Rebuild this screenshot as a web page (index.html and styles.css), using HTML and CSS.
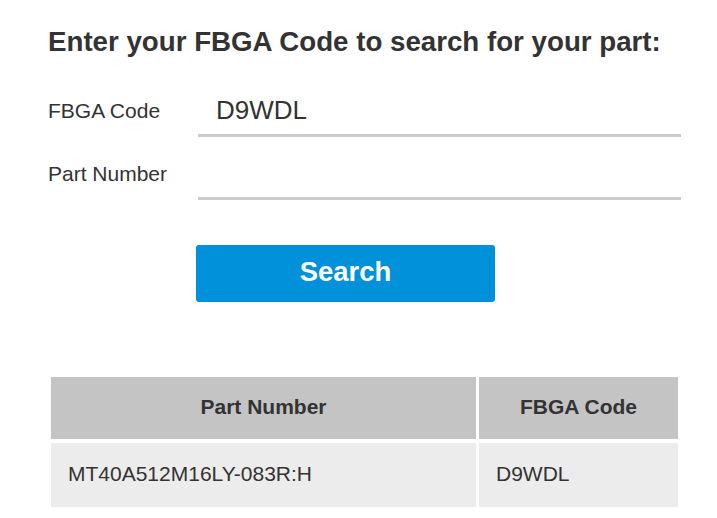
FILE: index.html
```html
<!DOCTYPE html>
<html lang="en">
<head>
<meta charset="utf-8">
<title>FBGA Code search</title>
<link rel="stylesheet" href="styles.css">
</head>
<body>
<main class="page">
  <h1 class="title">Enter your FBGA Code to search for your part:</h1>
  <form class="form">
    <div class="row">
      <label class="label" for="fbga">FBGA Code</label>
      <input class="field" id="fbga" type="text" value="D9WDL">
    </div>
    <div class="row">
      <label class="label" for="part">Part Number</label>
      <input class="field" id="part" type="text" value="">
    </div>
    <button class="btn" type="button">Search</button>
  </form>
  <div class="results">
    <div class="cell head">Part Number</div>
    <div class="cell head">FBGA Code</div>
    <div class="cell body">MT40A512M16LY-083R:H</div>
    <div class="cell body">D9WDL</div>
  </div>
</main>
</body>
</html>
```
FILE: styles.css
```css
html, body {
  margin: 0;
  padding: 0;
  background: #ffffff;
}
body {
  font-family: "Liberation Sans", Arial, sans-serif;
  color: #333333;
}
.page {
  padding: 25px 0 0 48px;
}
.title {
  margin: 0;
  font-size: 27.7px;
  line-height: 33px;
  font-weight: bold;
  color: #333333;
}
.form {
  margin-top: 29px;
  display: flex;
  flex-direction: column;
  align-items: flex-start;
}
.row {
  display: flex;
  align-items: center;
  height: 50px;
  margin-bottom: 13px;
}
.label {
  width: 150px;
  font-size: 21px;
  padding-bottom: 2px;
  color: #333333;
}
.field {
  box-sizing: border-box;
  width: 483px;
  height: 50px;
  border: none;
  border-bottom: 3px solid #cccccc;
  padding: 0 0 0 18px;
  margin: 0;
  font-family: "Liberation Sans", Arial, sans-serif;
  font-size: 26px;
  color: #333333;
  background: transparent;
  outline: none;
}
.btn {
  margin: 32px 0 0 148px;
  width: 299px;
  height: 57px;
  padding: 0 0 3px;
  border: none;
  border-radius: 3px;
  background: #0091da;
  color: #ffffff;
  font-family: "Liberation Sans", Arial, sans-serif;
  font-size: 27.5px;
  font-weight: bold;
}
.results {
  margin: 75px 0 0 3px;
  display: grid;
  grid-template-columns: 425px 199px;
  grid-template-rows: 62px 64px;
  gap: 4px 3px;
}
.cell {
  display: flex;
  align-items: center;
  font-size: 21px;
}
.head {
  background: #c4c4c4;
  justify-content: center;
  font-weight: bold;
  padding-bottom: 2px;
}
.body {
  background: #ececec;
  padding-left: 17px;
  padding-bottom: 2px;
}
```
